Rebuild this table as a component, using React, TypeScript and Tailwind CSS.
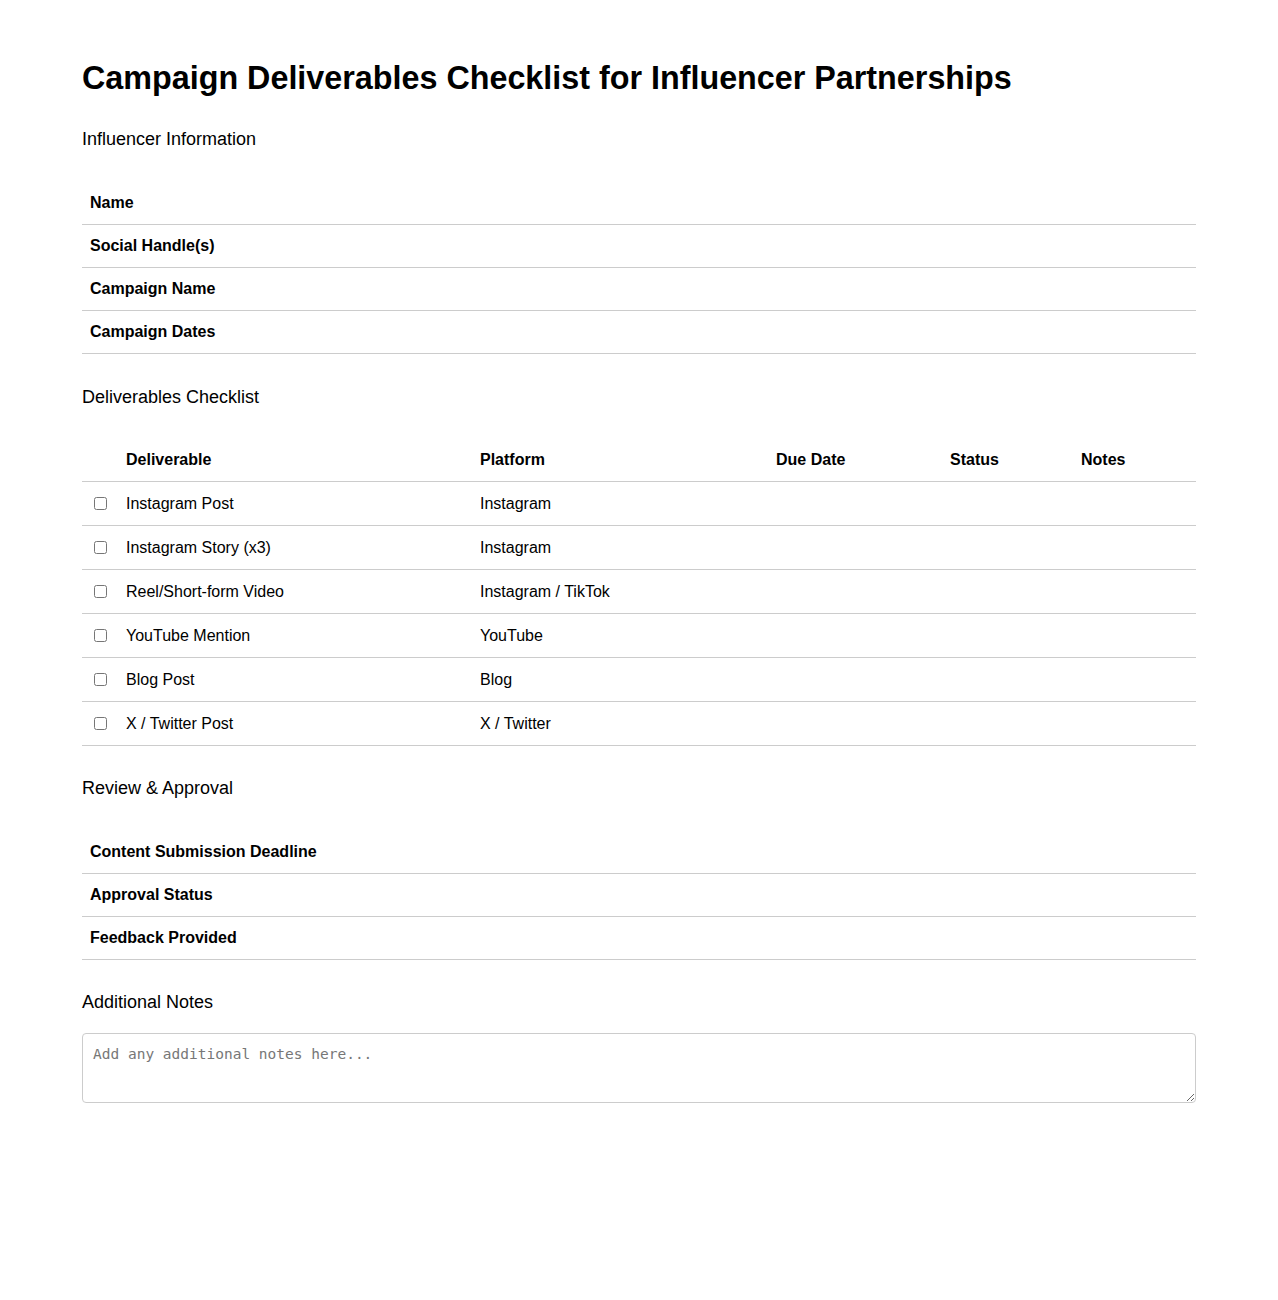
const infoRows = ["Name", "Social Handle(s)", "Campaign Name", "Campaign Dates"];

const deliverables = [
  { name: "Instagram Post", platform: "Instagram" },
  { name: "Instagram Story (x3)", platform: "Instagram" },
  { name: "Reel/Short-form Video", platform: "Instagram / TikTok" },
  { name: "YouTube Mention", platform: "YouTube" },
  { name: "Blog Post", platform: "Blog" },
  { name: "X / Twitter Post", platform: "X / Twitter" },
];

const reviewRows = ["Content Submission Deadline", "Approval Status", "Feedback Provided"];

function SectionTitle({ children, className }: { children: React.ReactNode; className: string }) {
  return (
    <h2 className={`text-[18px] leading-[21px] font-normal ${className}`}>{children}</h2>
  );
}

function LabelTable({ rows }: { rows: string[] }) {
  return (
    <table className="w-full border-collapse">
      <tbody>
        {rows.map((label) => (
          <tr key={label} className="border-b border-[#cccccc]">
            <th className="whitespace-nowrap px-2 py-3 text-left text-base leading-[18px] font-bold">
              {label}
            </th>
            <td className="w-full px-2 py-3 leading-[18px]"></td>
          </tr>
        ))}
      </tbody>
    </table>
  );
}

export default function App() {
  return (
    <div
      className="min-h-[1300px] bg-white px-[82px] pt-[60px] text-black"
      style={{ fontFamily: '"Liberation Sans", Arial, sans-serif' }}
    >
      <h1 className="text-[32.3px] leading-[37px] font-bold">
        Campaign Deliverables Checklist for Influencer Partnerships
      </h1>

      <SectionTitle className="mt-[32px] mb-[32px]">Influencer Information</SectionTitle>
      <LabelTable rows={infoRows} />

      <SectionTitle className="mt-[33px] mb-[31px]">Deliverables Checklist</SectionTitle>
      <table className="w-full table-fixed border-collapse">
        <colgroup>
          <col className="w-[36px]" />
          <col className="w-[354px]" />
          <col className="w-[296px]" />
          <col className="w-[174px]" />
          <col className="w-[131px]" />
          <col />
        </colgroup>
        <thead>
          <tr className="border-b border-[#cccccc] text-left text-base leading-[18px] font-bold">
            <th className="px-2 py-3"></th>
            <th className="px-2 py-3">Deliverable</th>
            <th className="px-2 py-3">Platform</th>
            <th className="px-2 py-3">Due Date</th>
            <th className="px-2 py-3">Status</th>
            <th className="px-2 py-3">Notes</th>
          </tr>
        </thead>
        <tbody>
          {deliverables.map((d) => (
            <tr key={d.name} className="border-b border-[#cccccc] text-base leading-[19px]">
              <td className="py-3 pr-2 pl-3 align-middle">
                <input type="checkbox" className="block h-[13px] w-[13px]" />
              </td>
              <td className="px-2 py-3">{d.name}</td>
              <td className="px-2 py-3">{d.platform}</td>
              <td className="px-2 py-3"></td>
              <td className="px-2 py-3"></td>
              <td className="px-2 py-3"></td>
            </tr>
          ))}
        </tbody>
      </table>

      <SectionTitle className="mt-[32px] mb-[32px]">Review &amp; Approval</SectionTitle>
      <LabelTable rows={reviewRows} />

      <SectionTitle className="mt-[32px] mb-[20px]">Additional Notes</SectionTitle>
      <textarea
        placeholder="Add any additional notes here..."
        className="block h-[70px] w-full rounded-[4px] border border-[#cccccc] px-[10px] py-[12px] text-[14.5px] leading-[16px] placeholder:text-[#777777]"
        style={{ fontFamily: '"DejaVu Sans Mono", monospace' }}
      />
    </div>
  );
}
